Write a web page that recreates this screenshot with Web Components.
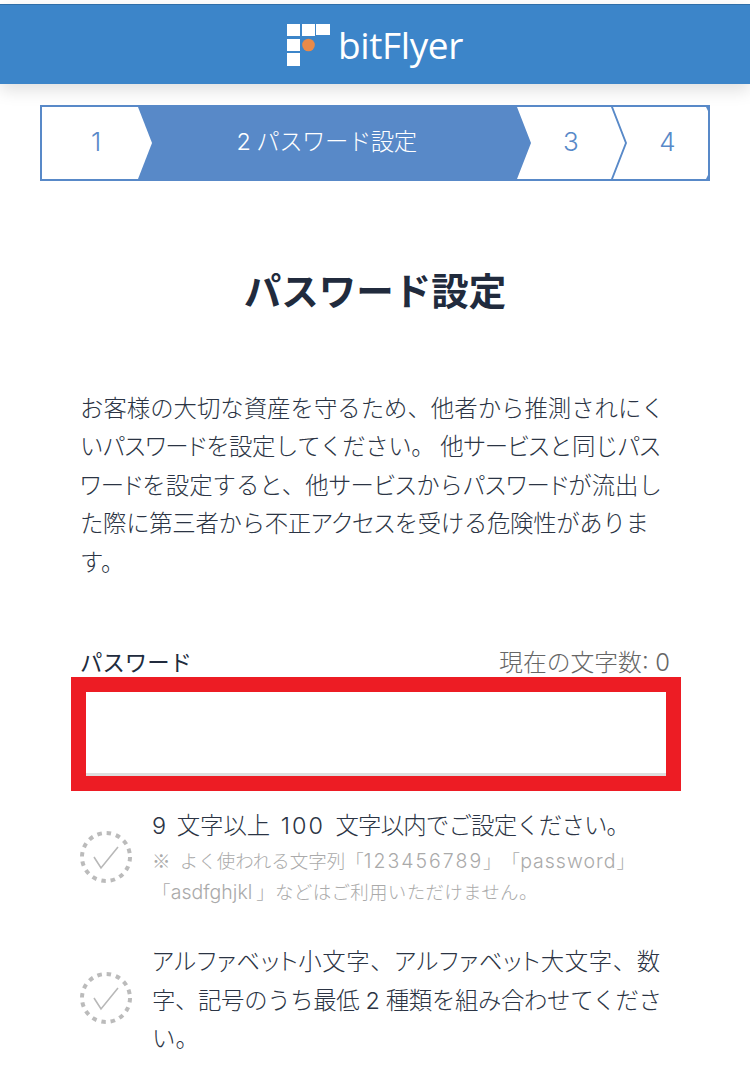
<!DOCTYPE html>
<html lang="ja">
<head>
<meta charset="utf-8">
<title>パスワード設定</title>
<style>
  html, body { margin: 0; padding: 0; background: #fff; }
  body {
    height: 1067px;
    overflow: hidden;
    font-family: Inter, "Noto Sans CJK JP", sans-serif;
    font-weight: 300;
    text-spacing-trim: space-all;
    color: #2b3444;
  }
</style>
</head>
<body>
<site-header></site-header>
<step-bar>
  <step-item kind="first">1</step-item>
  <step-item kind="active">2 パスワード設定</step-item>
  <step-item kind="mid">3</step-item>
  <step-item kind="last">4</step-item>
</step-bar>
<page-title>パスワード設定</page-title>
<intro-text>
  <text-line>お客様の大切な資産を守るため、他者から推測されにく</text-line>
  <text-line style="letter-spacing: -.45px">いパスワードを設定してください。 他サービスと同じパス</text-line>
  <text-line>ワードを設定すると、他サービスからパスワードが流出し</text-line>
  <text-line style="letter-spacing: -.3px">た際に第三者から不正アクセスを受ける危険性がありま</text-line>
  <text-line>す。</text-line>
</intro-text>
<password-field></password-field>
<rule-item style="--top: 16px; --icon-top: 24px">
  <text-line>9 文字以上 <span style="letter-spacing: 2px">100</span> <span style="letter-spacing: -.8px">文字以内でご設定ください。</span></text-line>
  <small slot="note">
    <text-line><span style="font-family: 'Noto Sans CJK JP', sans-serif; margin-right: 4px">※</span> よく使われる文字列「<span style="font-size: 19.5px; letter-spacing: 2px">123456789</span>」「<span style="font-size: 19.5px; letter-spacing: 1px">password</span>」</text-line>
    <text-line style="letter-spacing: .3px">「<span style="font-size: 19.5px; margin-right: 4px; letter-spacing: 0">asdfghjkl</span>」などはご利用いただけません。</text-line>
  </small>
</rule-item>
<rule-item style="--top: 35px; --icon-top: 29px">
  <text-line style="letter-spacing: .6px">アルファベット小文字、アルファベット大文字、数</text-line>
  <text-line style="word-spacing: 0; letter-spacing: -.35px">字、記号のうち最低 2 種類を組み合わせてくださ</text-line>
  <text-line>い。</text-line>
</rule-item>

<script>
// katakana is set proportionally in the reference, kanji and hiragana stay full width
class KanaRun extends HTMLElement {
  constructor() {
    super();
    this.attachShadow({ mode: "open" });
    this.shadowRoot.innerHTML = `<style>:host { display: inline; font-feature-settings: "palt"; }</style><slot></slot>`;
  }
}

class TextLine extends HTMLElement {
  constructor() {
    super();
    this.attachShadow({ mode: "open" });
    this.shadowRoot.innerHTML = `<style>:host { display: block; white-space: nowrap; }</style><slot></slot>`;
  }
}

function wrapKana(root) {
  const walker = document.createTreeWalker(root, NodeFilter.SHOW_TEXT);
  const nodes = [];
  while (walker.nextNode()) nodes.push(walker.currentNode);
  nodes.forEach(node => {
    const parts = node.textContent.split(/([ァ-ヶー]+)/);
    if (parts.length < 2) return;
    const frag = document.createDocumentFragment();
    parts.forEach((part, i) => {
      if (i % 2) {
        const run = document.createElement("kana-run");
        run.textContent = part;
        frag.append(run);
      } else if (part) {
        frag.append(part);
      }
    });
    node.replaceWith(frag);
  });
}

class SiteHeader extends HTMLElement {
  constructor() {
    super();
    this.attachShadow({ mode: "open" });
    this.shadowRoot.innerHTML = `
    <style>
      :host {
        display: flex;
        justify-content: center;
        align-items: center;
        gap: 8px;
        box-sizing: border-box;
        height: 80px;
        margin-top: 4px;
        background: #3c85c9;
        border-top: 1px solid #2f6ea8;
        box-shadow: 0 6px 16px rgba(0, 0, 0, .13);
      }
      svg { display: block; }
      span {
        font: 400 37px/1 "Open Sans", sans-serif;
        letter-spacing: -.4px;
        color: #fff;
      }
    </style>
    <svg width="43" height="42" viewBox="0 0 43 42">
      <g fill="#fff">
        <rect x="0" y="0" width="13" height="12"/>
        <rect x="15" y="0" width="13" height="12"/>
        <rect x="29" y="0" width="14" height="11"/>
        <rect x="0" y="15" width="13" height="12"/>
        <rect x="0" y="29" width="13" height="13"/>
      </g>
      <circle cx="21.5" cy="21" r="6.3" fill="#ea8a48"/>
    </svg>
    <span>bitFlyer</span>
    `;
  }
}

class StepBar extends HTMLElement {
  constructor() {
    super();
    this.attachShadow({ mode: "open" });
    this.shadowRoot.innerHTML = `
    <style>
      :host {
        display: flex;
        box-sizing: border-box;
        width: 670px;
        height: 76px;
        margin: 21px 0 0 40px;
        padding: 2px;
        background: #5889c8;
      }
    </style>
    <slot></slot>
    `;
  }
}

class StepItem extends HTMLElement {
  constructor() {
    super();
    this.attachShadow({ mode: "open" });
    this.shadowRoot.innerHTML = `
    <style>
      :host {
        display: block;
        box-sizing: border-box;
        height: 72px;
        line-height: 70px;
        text-align: center;
        flex: none;
        background: #fff;
        color: #5889c8;
        font-size: 26px;
        font-weight: 300;
      }
      :host([kind="first"]) {
        width: 110px;
        padding-right: 2px;
        clip-path: polygon(0 0, 96px 0, 110px 50%, 96px 100%, 0 100%);
      }
      :host([kind="active"]) {
        width: 393px;
        margin-left: -14px;
        padding-right: 16px;
        background: transparent;
        color: #fff;
        font-size: 23.4px;
        letter-spacing: -.5px;
      }
      :host([kind="mid"]) {
        width: 108px;
        margin-left: -14px;
        clip-path: polygon(0 0, 94px 0, 108px 50%, 94px 100%, 0 100%, 14px 50%);
      }
      :host([kind="last"]) {
        width: 95px;
        margin-left: -12px;
        padding-left: 14px;
        clip-path: polygon(0 0, 93px 0, 95px 4px, 95px 68px, 93px 100%, 0 100%, 14px 50%);
      }
    </style>
    <slot></slot>
    `;
  }
}

class PageTitle extends HTMLElement {
  constructor() {
    super();
    this.attachShadow({ mode: "open" });
    this.shadowRoot.innerHTML = `
    <style>
      :host {
        display: block;
        margin-top: 84px;
        text-align: center;
        font-size: 37.5px;
        line-height: 54px;
        font-weight: 700;
        color: #212b3d;
      }
    </style>
    <slot></slot>
    `;
  }
}

class IntroText extends HTMLElement {
  constructor() {
    super();
    this.attachShadow({ mode: "open" });
    this.shadowRoot.innerHTML = `
    <style>
      :host {
        display: block;
        margin: 71px 80px 0;
        font-size: 23.4px;
        line-height: 38.4px;
      }
    </style>
    <slot></slot>
    `;
  }
}

class PasswordField extends HTMLElement {
  constructor() {
    super();
    this.attachShadow({ mode: "open" });
    this.shadowRoot.innerHTML = `
    <style>
      :host { display: block; margin-top: 63px; }
      .head {
        display: flex;
        justify-content: space-between;
        align-items: baseline;
        margin: 0 80px;
        height: 32px;
      }
      b { font-size: 22.4px; line-height: 36px; color: #212b3d; }
      span { font-size: 23.8px; line-height: 36px; color: #666; }
      .mask {
        box-sizing: border-box;
        width: 610px;
        height: 114px;
        margin-left: 71px;
        border: 15px solid #ed1c24;
        background: #fff;
      }
      .input {
        box-sizing: border-box;
        height: 84px;
        border-bottom: 3px solid #dedede;
      }
    </style>
    <div class="head"><b>パスワード</b><span>現在の文字数: 0</span></div>
    <div class="mask"><div class="input"></div></div>
    `;
  }
}

class RuleItem extends HTMLElement {
  constructor() {
    super();
    this.attachShadow({ mode: "open" });
    this.shadowRoot.innerHTML = `
    <style>
      :host {
        display: flex;
        gap: 20px;
        margin: var(--top) 0 0 80px;
        font-size: 23.4px;
        line-height: 38.4px;
        word-spacing: 4px;
      }
      svg { flex: none; width: 52px; height: 52px; margin-top: var(--icon-top); }
      .body { min-width: 0; }
      ::slotted(small) {
        display: block;
        font-size: 18.5px;
        line-height: 31px;
        word-spacing: 0;
        color: #aaa;
      }
    </style>
    <svg viewBox="0 0 52 52" fill="none">
      <circle cx="26" cy="26" r="24" stroke="#bbb" stroke-width="4" stroke-dasharray="4.5 4.92"/>
      <path d="M14 26 L21 37 L38 16" stroke="#b8b8b8" stroke-width="1.6"/>
    </svg>
    <div class="body"><slot></slot><slot name="note"></slot></div>
    `;
  }
}

document.querySelectorAll("text-line").forEach(wrapKana);
customElements.define("kana-run", KanaRun);
customElements.define("text-line", TextLine);
customElements.define("site-header", SiteHeader);
customElements.define("step-bar", StepBar);
customElements.define("step-item", StepItem);
customElements.define("page-title", PageTitle);
customElements.define("intro-text", IntroText);
customElements.define("password-field", PasswordField);
customElements.define("rule-item", RuleItem);
</script>
</body>
</html>
